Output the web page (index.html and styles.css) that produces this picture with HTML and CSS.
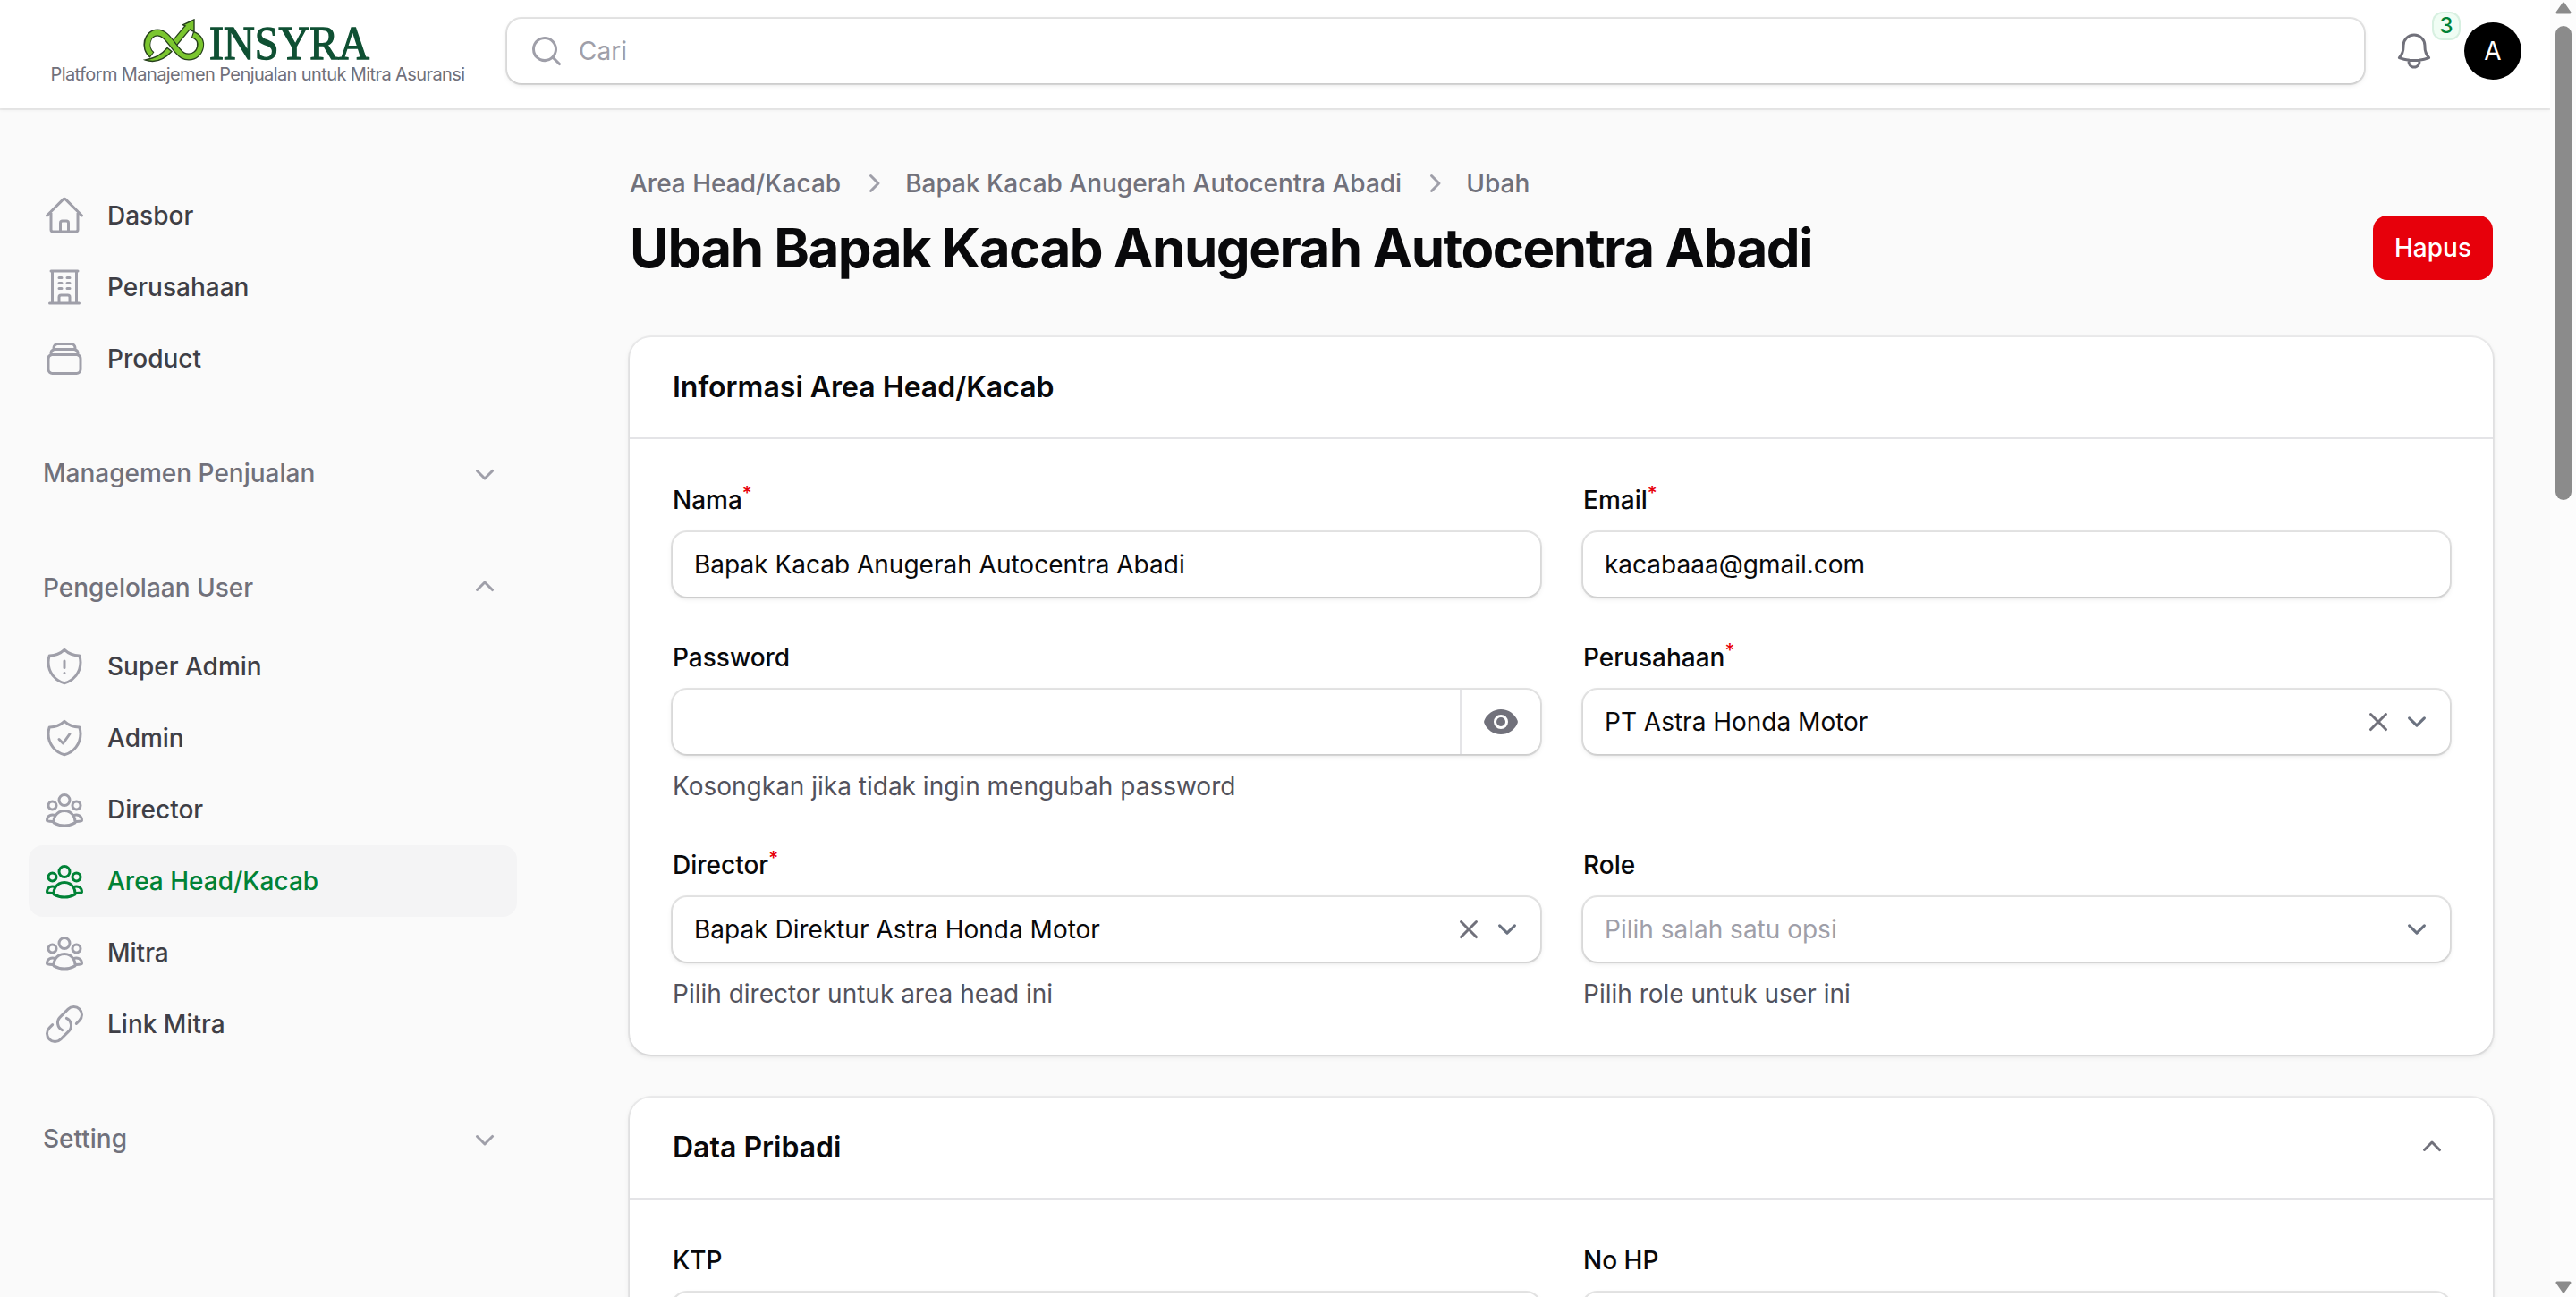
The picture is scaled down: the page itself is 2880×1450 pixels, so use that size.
FILE: index.html
```html
<!DOCTYPE html>
<html lang="id">
<head>
    <meta charset="UTF-8">
    <title>Ubah Bapak Kacab Anugerah Autocentra Abadi</title>
    <link rel="stylesheet" href="styles.css">
</head>
<body>
<!-- icons -->
<svg class="sprite">
    <symbol id="home" viewBox="0 0 24 24"><path d="m2.25 12 8.954-8.955c.44-.439 1.152-.439 1.591 0L21.75 12M4.5 9.75v10.125c0 .621.504 1.125 1.125 1.125H9.75v-4.875c0-.621.504-1.125 1.125-1.125h2.25c.621 0 1.125.504 1.125 1.125V21h4.125c.621 0 1.125-.504 1.125-1.125V9.75M8.25 21h8.25"/></symbol>
    <symbol id="office" viewBox="0 0 24 24"><path d="M3.75 21h16.5M4.5 3h15M5.25 3v18m13.5-18v18M9 6.75h1.5m-1.5 3h1.5m-1.5 3h1.5m3-6H15m-1.5 3H15m-1.5 3H15M9 21v-3.375c0-.621.504-1.125 1.125-1.125h3.75c.621 0 1.125.504 1.125 1.125V21"/></symbol>
    <symbol id="stack" viewBox="0 0 24 24"><path d="M6 6.878V6a2.25 2.25 0 0 1 2.25-2.25h7.5A2.25 2.25 0 0 1 18 6v.878m-12 0c.235-.083.487-.128.75-.128h10.5c.263 0 .515.045.75.128m-12 0A2.25 2.25 0 0 0 4.5 9v.878m13.5-3A2.25 2.25 0 0 1 19.5 9v.878m0 0a2.246 2.246 0 0 0-.75-.128H5.25c-.263 0-.515.045-.75.128m15 0A2.25 2.25 0 0 1 21 12v6a2.25 2.25 0 0 1-2.25 2.25H5.25A2.25 2.25 0 0 1 3 18v-6c0-.98.626-1.813 1.5-2.122"/></symbol>
    <symbol id="shield-ex" viewBox="0 0 24 24"><path d="M12 9v3.75m0-10.036A11.959 11.959 0 0 1 3.598 6 11.99 11.99 0 0 0 3 9.749c0 5.592 3.824 10.29 9 11.623 5.176-1.332 9-6.03 9-11.623 0-1.31-.21-2.57-.598-3.751h-.152c-3.196 0-6.1-1.248-8.25-3.285Zm0 13.036h.008v.008H12v-.008Z"/></symbol>
    <symbol id="shield-ok" viewBox="0 0 24 24"><path d="M9 12.75 11.25 15 15 9.75m-3-7.036A11.959 11.959 0 0 1 3.598 6 11.99 11.99 0 0 0 3 9.749c0 5.592 3.824 10.29 9 11.623 5.176-1.332 9-6.03 9-11.622 0-1.31-.21-2.571-.598-3.751h-.152c-3.196 0-6.1-1.248-8.25-3.285Z"/></symbol>
    <symbol id="users" viewBox="0 0 24 24"><path d="M18 18.72a9.094 9.094 0 0 0 3.741-.479 3 3 0 0 0-4.682-2.72m.94 3.198.001.031c0 .225-.012.447-.037.666A11.944 11.944 0 0 1 12 21c-2.17 0-4.207-.576-5.963-1.584A6.062 6.062 0 0 1 6 18.719m12 0a5.971 5.971 0 0 0-.941-3.197m0 0A5.995 5.995 0 0 0 12 12.75a5.995 5.995 0 0 0-5.058 2.772m0 0a3 3 0 0 0-4.681 2.72 8.986 8.986 0 0 0 3.74.477m.94-3.197a5.971 5.971 0 0 0-.94 3.197M15 6.75a3 3 0 1 1-6 0 3 3 0 0 1 6 0Zm6 3a2.25 2.25 0 1 1-4.5 0 2.25 2.25 0 0 1 4.5 0Zm-13.5 0a2.25 2.25 0 1 1-4.5 0 2.25 2.25 0 0 1 4.5 0Z"/></symbol>
    <symbol id="link" viewBox="0 0 24 24"><path d="M13.19 8.688a4.5 4.5 0 0 1 1.242 7.244l-4.5 4.5a4.5 4.5 0 0 1-6.364-6.364l1.757-1.757m13.35-.622 1.757-1.757a4.5 4.5 0 0 0-6.364-6.364l-4.5 4.5a4.5 4.5 0 0 0 1.242 7.244"/></symbol>
    <symbol id="bell" viewBox="0 0 24 24"><path d="M14.857 17.082a23.848 23.848 0 0 0 5.454-1.31A8.967 8.967 0 0 1 18 9.75V9A6 6 0 0 0 6 9v.75a8.967 8.967 0 0 1-2.312 6.022c1.733.64 3.56 1.085 5.455 1.31m5.714 0a24.255 24.255 0 0 1-5.714 0m5.714 0a3 3 0 1 1-5.714 0"/></symbol>
    <symbol id="search" viewBox="0 0 20 20"><path fill-rule="evenodd" d="M9 3.5a5.5 5.5 0 1 0 0 11 5.5 5.5 0 0 0 0-11ZM2 9a7 7 0 1 1 12.452 4.391l3.328 3.329a.75.75 0 1 1-1.06 1.06l-3.329-3.328A7 7 0 0 1 2 9Z"/></symbol>
    <symbol id="down" viewBox="0 0 20 20"><path fill-rule="evenodd" d="M5.22 8.22a.75.75 0 0 1 1.06 0L10 11.94l3.72-3.72a.75.75 0 1 1 1.06 1.06l-4.25 4.25a.75.75 0 0 1-1.06 0L5.22 9.28a.75.75 0 0 1 0-1.06Z"/></symbol>
    <symbol id="up" viewBox="0 0 20 20"><path fill-rule="evenodd" d="M9.47 6.47a.75.75 0 0 1 1.06 0l4.25 4.25a.75.75 0 1 1-1.06 1.06L10 8.06l-3.72 3.72a.75.75 0 0 1-1.06-1.06l4.25-4.25Z"/></symbol>
    <symbol id="next" viewBox="0 0 20 20"><path fill-rule="evenodd" d="M8.22 5.22a.75.75 0 0 1 1.06 0l4.25 4.25a.75.75 0 0 1 0 1.06l-4.25 4.25a.75.75 0 0 1-1.06-1.06L11.94 10 8.22 6.28a.75.75 0 0 1 0-1.06Z"/></symbol>
    <symbol id="close" viewBox="0 0 20 20"><path d="M6.28 5.22a.75.75 0 0 0-1.06 1.06L8.94 10l-3.72 3.72a.75.75 0 1 0 1.06 1.06L10 11.06l3.72 3.72a.75.75 0 1 0 1.06-1.06L11.06 10l3.72-3.72a.75.75 0 0 0-1.06-1.06L10 8.94 6.28 5.22Z"/></symbol>
    <symbol id="eye" viewBox="0 0 20 20"><path d="M10 12.5a2.5 2.5 0 1 0 0-5 2.5 2.5 0 0 0 0 5Z"/><path fill-rule="evenodd" d="M.664 10.59a1.651 1.651 0 0 1 0-1.186A10.004 10.004 0 0 1 10 3c4.257 0 7.893 2.66 9.336 6.41.147.381.146.804 0 1.186A10.004 10.004 0 0 1 10 17c-4.257 0-7.893-2.66-9.336-6.41ZM14 10a4 4 0 1 1-8 0 4 4 0 0 1 8 0Z"/></symbol>
    <symbol id="select" viewBox="0 0 20 20"><path fill="none" stroke="#6b7280" stroke-linecap="round" stroke-linejoin="round" stroke-width="1.5" d="m6 8 4 4 4-4"/></symbol>
</svg>

<header class="topbar">
    <div class="brand">
        <svg class="logo" viewBox="0 0 256 56">
            <path class="leaf" d="M2.5 51C13 49 20 46 27 37.500L32 41.500C24 50 14 55 2.500 51z"/>
            <path class="edge" d="M34.500 33 51.500 12.500"/>
            <path class="band" d="M34 33.600 52 12"/>
            <path class="leaf" d="m57 6-12.500 5.800 3.700 1.600 5.200 4.400 3.600 1.600z"/>
            <path class="edge" d="M10 45.500C0 38 4 20.500 16 20.500c9 0 14 10 22 19.500 5 6 8 7.500 13 7.500C65 47.500 70 27 55 22.500"/>
            <path class="band" d="M9.200 44.700C1 37 5 20.500 16 20.500c9 0 14 10 22 19.500 5 6 8 7.500 13 7.500C65 47.500 70 28 56 23"/>
            <path class="band" d="M49 16 52.500 11.600"/>
            <text class="wordmark" x="74" y="50" textLength="179" lengthAdjust="spacingAndGlyphs">INSYRA</text>
        </svg>
        <p class="tagline">Platform Manajemen Penjualan untuk Mitra Asuransi</p>
    </div>
    <div class="search input">
        <svg class="mini"><use href="#search"/></svg>
        <span>Cari</span>
    </div>
    <div class="bell">
        <svg class="icon"><use href="#bell"/></svg>
        <span class="badge">3</span>
    </div>
    <div class="avatar">A</div>
</header>

<div class="layout">
    <nav class="sidebar">
        <ul>
            <li class="item"><svg class="icon"><use href="#home"/></svg>Dasbor</li>
            <li class="item"><svg class="icon"><use href="#office"/></svg>Perusahaan</li>
            <li class="item"><svg class="icon"><use href="#stack"/></svg>Product</li>
        </ul>
        <div class="group">Managemen Penjualan<svg class="mini"><use href="#down"/></svg></div>
        <div>
            <div class="group open">Pengelolaan User<svg class="mini"><use href="#up"/></svg></div>
            <ul>
                <li class="item"><svg class="icon"><use href="#shield-ex"/></svg>Super Admin</li>
                <li class="item"><svg class="icon"><use href="#shield-ok"/></svg>Admin</li>
                <li class="item"><svg class="icon"><use href="#users"/></svg>Director</li>
                <li class="item active"><svg class="icon"><use href="#users"/></svg>Area Head/Kacab</li>
                <li class="item"><svg class="icon"><use href="#users"/></svg>Mitra</li>
                <li class="item"><svg class="icon"><use href="#link"/></svg>Link Mitra</li>
            </ul>
        </div>
        <div class="group">Setting<svg class="mini"><use href="#down"/></svg></div>
    </nav>

    <main class="main">
        <div class="breadcrumbs">
            <span>Area Head/Kacab</span>
            <svg class="mini"><use href="#next"/></svg>
            <span>Bapak Kacab Anugerah Autocentra Abadi</span>
            <svg class="mini"><use href="#next"/></svg>
            <span>Ubah</span>
        </div>
        <div class="heading">
            <h1>Ubah Bapak Kacab Anugerah Autocentra Abadi</h1>
            <button class="delete">Hapus</button>
        </div>

        <section class="card">
            <div class="card-head"><h2>Informasi Area Head/Kacab</h2></div>
            <div class="fields">
                <div class="field">
                    <label>Nama<sup>*</sup></label>
                    <div class="input">Bapak Kacab Anugerah Autocentra Abadi</div>
                </div>
                <div class="field">
                    <label>Email<sup>*</sup></label>
                    <div class="input">kacabaaa@gmail.com</div>
                </div>
                <div class="field">
                    <label>Password</label>
                    <div class="input password">
                        <span class="reveal"><svg class="mini"><use href="#eye"/></svg></span>
                    </div>
                    <p class="hint">Kosongkan jika tidak ingin mengubah password</p>
                </div>
                <div class="field">
                    <label>Perusahaan<sup>*</sup></label>
                    <div class="input select">
                        <span class="value">PT Astra Honda Motor</span>
                        <svg class="mini"><use href="#close"/></svg>
                        <svg class="arrow"><use href="#select"/></svg>
                    </div>
                </div>
                <div class="field">
                    <label>Director<sup>*</sup></label>
                    <div class="input select">
                        <span class="value">Bapak Direktur Astra Honda Motor</span>
                        <svg class="mini"><use href="#close"/></svg>
                        <svg class="arrow"><use href="#select"/></svg>
                    </div>
                    <p class="hint">Pilih director untuk area head ini</p>
                </div>
                <div class="field">
                    <label>Role</label>
                    <div class="input select">
                        <span class="value placeholder">Pilih salah satu opsi</span>
                        <svg class="arrow"><use href="#select"/></svg>
                    </div>
                    <p class="hint">Pilih role untuk user ini</p>
                </div>
            </div>
        </section>

        <section class="card">
            <div class="card-head">
                <h2>Data Pribadi</h2>
                <svg class="mini"><use href="#up"/></svg>
            </div>
            <div class="fields">
                <div class="field">
                    <label>KTP</label>
                    <div class="input"></div>
                </div>
                <div class="field">
                    <label>No HP</label>
                    <div class="input"></div>
                </div>
            </div>
        </section>
    </main>
</div>

<div class="scrollbar">
    <svg viewBox="0 0 18 14"><path d="M9 2 16 12H2z"/></svg>
    <div class="thumb"></div>
    <svg class="end" viewBox="0 0 18 14"><path d="M9 12 2 2h14z"/></svg>
</div>
</body>
</html>
```
FILE: styles.css
```css
* {
    margin: 0;
    padding: 0;
    box-sizing: border-box;
    list-style: none;
}
body {
    height: 1450px;
    padding-right: 29px;
    overflow: hidden;
    background: #fafafa;
    color: #09090b;
    font: 400 28px/40px Inter, "Liberation Sans", sans-serif;
}
svg {
    flex-shrink: 0;
}
.sprite {
    display: none;
}
.icon {
    width: 48px;
    height: 48px;
    fill: none;
    stroke: #9f9fa9;
    stroke-width: 1.5;
    stroke-linecap: round;
    stroke-linejoin: round;
}
.mini {
    width: 40px;
    height: 40px;
    fill: #9f9fa9;
}

/* topbar */
.topbar {
    position: relative;
    display: flex;
    align-items: center;
    height: 121px;
    padding: 0 32px 7px 56px;
    background: #fff;
    box-shadow: 0 0 0 2px rgba(9, 9, 11, .06), 0 2px 4px rgba(0, 0, 0, .05);
}
.brand {
    align-self: flex-start;
    width: 464px;
    margin-right: 47px;
    padding-top: 16px;
}
.logo {
    display: block;
    width: 256px;
    height: 56px;
    margin: 0 auto 1px;
    overflow: visible;
}
.edge {
    fill: none;
    stroke: #26401c;
    stroke-width: 8;
}
.band {
    fill: none;
    stroke: #7bc62f;
    stroke-width: 5.4;
}
.leaf {
    fill: #7bc62f;
    stroke: #26401c;
    stroke-width: 1.4;
}
.wordmark {
    fill: #0f5033;
    stroke: #0f5033;
    stroke-width: 1.4;
    font: 400 53px "Liberation Serif", serif;
}
.tagline {
    color: #71717b;
    font-size: 20px;
    line-height: 20px;
    letter-spacing: -.6px;
    text-align: center;
    white-space: nowrap;
}
.input {
    display: flex;
    align-items: center;
    height: 72px;
    padding: 0 24px;
    background: #fff;
    border-radius: 16px;
    box-shadow: 0 0 0 2px rgba(9, 9, 11, .1), 0 2px 6px rgba(0, 0, 0, .1), 0 2px 4px -2px rgba(0, 0, 0, .1);
}
.search {
    flex: 1;
    gap: 16px;
    color: #9f9fa9;
}
.bell {
    position: relative;
    display: flex;
    margin: 0 32px;
}
.bell .icon {
    stroke: #71717b;
}
.badge {
    position: absolute;
    left: 44px;
    top: -20px;
    width: 32px;
    height: 32px;
    border-radius: 12px;
    background: #f0fdf4;
    box-shadow: inset 0 0 0 2px rgba(0, 130, 54, .1);
    color: #008236;
    font-size: 24px;
    font-weight: 500;
    line-height: 32px;
    text-align: center;
}
.avatar {
    width: 64px;
    height: 64px;
    border-radius: 50%;
    background: #000;
    color: #fff;
    line-height: 64px;
    text-align: center;
}

/* sidebar */
.layout {
    display: flex;
}
.sidebar {
    display: flex;
    flex-direction: column;
    gap: 48px;
    width: 640px;
    padding: 80px 62px 0 32px;
    font-weight: 500;
}
.item {
    display: flex;
    align-items: center;
    gap: 24px;
    height: 80px;
    padding: 0 16px;
    border-radius: 16px;
    color: #3f3f46;
}
.active {
    background: #f4f4f5;
    color: #008236;
}
.active .icon {
    stroke: #008236;
}
.group {
    display: flex;
    align-items: center;
    justify-content: space-between;
    height: 80px;
    padding: 0 16px;
    color: #71717b;
}
.open {
    margin-bottom: 8px;
}

/* main */
.main {
    flex: 1;
    padding: 64px 64px 0;
}
.breadcrumbs {
    display: flex;
    gap: 16px;
    margin-bottom: 16px;
    color: #71717b;
    font-weight: 500;
}
.heading {
    display: flex;
    justify-content: space-between;
    margin-bottom: 64px;
}
h1 {
    font-size: 60px;
    font-weight: 700;
    line-height: 72px;
    letter-spacing: -.025em;
}
.delete {
    width: 134px;
    height: 72px;
    border: 0;
    border-radius: 16px;
    background: #e7000b;
    color: #fff;
    font: inherit;
    font-weight: 500;
}
.card {
    margin-bottom: 48px;
    background: #fff;
    border-radius: 24px;
    box-shadow: 0 0 0 2px rgba(9, 9, 11, .05), 0 2px 6px rgba(0, 0, 0, .1), 0 2px 4px -2px rgba(0, 0, 0, .1);
}
.card-head {
    display: flex;
    align-items: center;
    justify-content: space-between;
    height: 112px;
    padding: 0 48px;
}
.card-head .mini {
    fill: #71717b;
}
h2 {
    font-size: 32px;
    font-weight: 600;
    line-height: 48px;
}
.fields {
    display: grid;
    grid-template-columns: 1fr 969px;
    gap: 48px;
    padding: 48px;
    border-top: 2px solid #e4e4e7;
}
label {
    display: block;
    height: 40px;
    margin-bottom: 16px;
    font-weight: 500;
}
sup {
    position: relative;
    top: -.5em;
    color: #e7000b;
    font-size: 75%;
    line-height: 0;
    vertical-align: baseline;
}
.input .mini {
    fill: #71717b;
}
.search .mini {
    fill: #9f9fa9;
}
.select {
    padding-right: 16px;
}
.value {
    flex: 1;
}
.placeholder {
    color: #9f9fa9;
}
.arrow {
    width: 42px;
    height: 42px;
    margin-left: 2px;
}
.password {
    justify-content: flex-end;
    padding: 0;
}
.reveal {
    display: flex;
    align-items: center;
    height: 72px;
    padding: 0 24px;
    border-left: 2px solid #e4e4e7;
}
.hint {
    margin-top: 16px;
    color: #52525c;
}

/* scrollbar */
.scrollbar {
    position: absolute;
    top: 0;
    right: 0;
    display: flex;
    flex-direction: column;
    align-items: center;
    width: 29px;
    height: 1450px;
    padding: 2px 5px 4px 6px;
    background: #fcfcfc;
}
.scrollbar svg {
    width: 18px;
    height: 14px;
    fill: #8b8b8b;
    stroke: #8b8b8b;
    stroke-width: 3;
    stroke-linejoin: round;
}
.thumb {
    width: 18px;
    height: 530px;
    margin-top: 13px;
    border-radius: 9px;
    background: #8b8b8b;
}
.end {
    margin-top: auto;
}
```
